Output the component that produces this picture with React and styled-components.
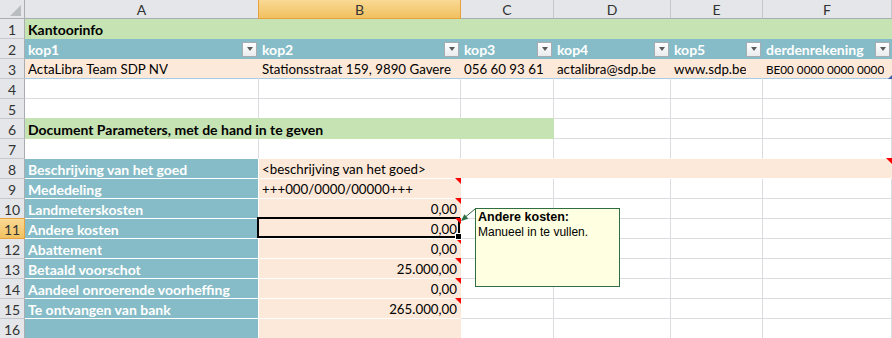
import React from "react";
import styled, { createGlobalStyle, css } from "styled-components";

const GREEN = "#c6e3b3";
const TEAL = "#86bcc7";
const PEACH = "#fde9d9";
const GRID = "#dadcdf";
const TABLE_LINE = "#a9cbe3";
const HEAD_BG = "#e4e6e9";
const HEAD_LINE = "#c4c7cb";
const HEAD_EDGE = "#a9adb2";
const ACTIVE_LINE = "#e9a13f";
const ACTIVE_BG = "linear-gradient(#f9d994, #f1c160)";

const GlobalStyle = createGlobalStyle`
  html, body {
    margin: 0;
    padding: 0;
    background: #fff;
    overflow: hidden;
  }
  body {
    font-family: Lato, "Liberation Sans", Arial, sans-serif;
  }
`;

const Sheet = styled.div`
  position: relative;
  display: grid;
  grid-template-columns: 25px 234px 202px 93px 117px 92px 129px;
  grid-template-rows: 19px repeat(16, 20px);
  width: 892px;
  height: 338px;
  overflow: hidden;
  font-size: 14px;
  color: #000;
`;

const Corner = styled.div`
  display: flex;
  align-items: flex-end;
  justify-content: flex-end;
  padding: 0 3px 2px 0;
  background: ${HEAD_BG};
  border-right: 1px solid ${HEAD_EDGE};
  border-bottom: 1px solid ${HEAD_EDGE};
`;

const CornerMark = styled.span`
  width: 0;
  height: 0;
  border-left: 11px solid transparent;
  border-bottom: 11px solid #b9bdc2;
`;

const ColHead = styled.div`
  display: flex;
  align-items: center;
  justify-content: center;
  padding-top: 1px;
  color: #333;
  background: ${(p) => (p.$active ? ACTIVE_BG : HEAD_BG)};
  border-right: 1px solid ${(p) => (p.$active ? ACTIVE_LINE : HEAD_LINE)};
  border-bottom: 1px solid ${(p) => (p.$active ? ACTIVE_LINE : HEAD_EDGE)};
  ${(p) => p.$active && css`box-shadow: -1px 0 0 ${ACTIVE_LINE};`}
`;

const RowHead = styled.div`
  display: flex;
  align-items: center;
  justify-content: center;
  padding-top: 1px;
  color: #333;
  background: ${(p) => (p.$active ? ACTIVE_BG : HEAD_BG)};
  border-right: 1px solid ${(p) => (p.$active ? ACTIVE_LINE : HEAD_EDGE)};
  border-bottom: 1px solid ${(p) => (p.$active ? ACTIVE_LINE : HEAD_LINE)};
  ${(p) => p.$active && css`box-shadow: 0 -1px 0 ${ACTIVE_LINE};`}
`;

const Cell = styled.div`
  position: relative;
  min-width: 0;
  display: flex;
  align-items: center;
  justify-content: ${(p) => (p.$right ? "flex-end" : "flex-start")};
  padding: 1px 3px 0 3px;
  grid-column: span ${(p) => p.$span || 1};
  background: ${(p) => p.$fill || "#fff"};
  border-right: 1px solid ${(p) => p.$edge || p.$fill || GRID};
  border-bottom: 1px solid ${(p) => p.$base || p.$edge || p.$fill || GRID};
  font-weight: ${(p) => (p.$bold ? 700 : 400)};
  font-size: ${(p) => (p.$bold ? "14px" : "13.3px")};
  color: ${(p) => (p.$light ? "#fff" : "#000")};

  ${(p) =>
    p.$note &&
    css`
      &::after {
        content: "";
        position: absolute;
        top: -1px;
        right: -1px;
        border-left: 6px solid transparent;
        border-top: 6px solid #f00;
      }
    `}

  ${(p) =>
    p.$corner &&
    css`
      padding-right: 0;
      font-size: 11.7px;
      &::after {
        content: "";
        position: absolute;
        bottom: -1px;
        right: -1px;
        border-left: 4px solid transparent;
        border-bottom: 4px solid #3a62a8;
      }
    `}

  ${(p) =>
    p.$selected &&
    css`
      z-index: 2;
      &::before {
        content: "";
        position: absolute;
        top: -2px;
        left: -2px;
        right: 0;
        bottom: 0;
        border: 2px solid #000;
        pointer-events: none;
      }
    `}
`;

const HeadCell = styled(Cell)`
  padding-right: 1px;
`;

const Text = styled.span`
  min-width: 0;
  overflow: hidden;
  white-space: nowrap;
`;

const FilterBtn = styled.span`
  flex: none;
  margin-left: auto;
  width: 15px;
  height: 15px;
  box-sizing: border-box;
  display: flex;
  align-items: center;
  justify-content: center;
  border: 1px solid #a8acb1;
  background: linear-gradient(#ffffff, #e9ebee);

  &::before {
    content: "";
    border-left: 3px solid transparent;
    border-right: 3px solid transparent;
    border-top: 4px solid #5a5a5a;
  }
`;

const FillHandle = styled.span`
  position: absolute;
  right: -1px;
  bottom: -1px;
  width: 5px;
  height: 5px;
  background: #000;
  box-shadow: 0 0 0 1px #fff;
  z-index: 3;
`;

const Comment = styled.div`
  position: absolute;
  left: 475px;
  top: 208px;
  width: 145px;
  height: 79px;
  box-sizing: border-box;
  padding: 1px 2px;
  border: 1px solid #2f6e45;
  background: #ffffe1;
  font-family: "Liberation Sans", Arial, sans-serif;
  font-size: 12px;
  line-height: 15px;
  color: #000;
  z-index: 5;
`;

const CommentTitle = styled.div`
  font-weight: 700;
  font-size: 12.5px;
`;

const Arrow = styled.svg`
  position: absolute;
  left: 458px;
  top: 206px;
  z-index: 6;
`;

const columns = ["A", "B", "C", "D", "E", "F"];
const heads = ["kop1", "kop2", "kop3", "kop4", "kop5", "derdenrekening"];
const info = [
  "ActaLibra Team SDP NV",
  "Stationsstraat 159, 9890 Gavere",
  "056 60 93 61",
  "actalibra@sdp.be",
  "www.sdp.be",
  "BE00 0000 0000 0000",
];

const params = [
  { row: 9, label: "Mededeling", value: "+++000/0000/00000+++", left: true, note: true },
  { row: 10, label: "Landmeterskosten", value: "0,00", note: true },
  { row: 11, label: "Andere kosten", value: "0,00", note: true, selected: true },
  { row: 12, label: "Abattement", value: "0,00", note: true },
  { row: 13, label: "Betaald voorschot", value: "25.000,00", note: true },
  { row: 14, label: "Aandeel onroerende voorheffing", value: "0,00", note: true },
  { row: 15, label: "Te ontvangen van bank", value: "265.000,00", note: true },
  { row: 16, label: "", value: "" },
];

const Empty = ({ count, base }) =>
  Array.from({ length: count }, (_, i) => <Cell key={i} $base={base} />);

export default function App() {
  return (
    <>
      <GlobalStyle />
      <Sheet>
        <Corner>
          <CornerMark />
        </Corner>
        {columns.map((c) => (
          <ColHead key={c} $active={c === "B"}>
            {c}
          </ColHead>
        ))}

        <RowHead>1</RowHead>
        <Cell $fill={GREEN} $span={6} $bold>
          <Text>Kantoorinfo</Text>
        </Cell>

        <RowHead>2</RowHead>
        {heads.map((h) => (
          <HeadCell key={h} $fill={TEAL} $bold $light>
            <Text>{h}</Text>
            <FilterBtn />
          </HeadCell>
        ))}

        <RowHead>3</RowHead>
        {info.map((v, i) => (
          <Cell key={v} $fill={PEACH} $base={TABLE_LINE} $corner={i === 5}>
            <Text>{v}</Text>
          </Cell>
        ))}

        <RowHead>4</RowHead>
        <Empty count={6} />

        <RowHead>5</RowHead>
        <Cell $base={GREEN} />
        <Cell $base={GREEN} />
        <Cell $base={GREEN} />
        <Empty count={3} />

        <RowHead>6</RowHead>
        <Cell $fill={GREEN} $span={3} $bold>
          <Text>Document Parameters, met de hand in te geven</Text>
        </Cell>
        <Empty count={3} />

        <RowHead>7</RowHead>
        <Empty count={6} base="#fff" />

        <RowHead>8</RowHead>
        <Cell $fill={TEAL} $edge="#fff" $bold $light>
          <Text>Beschrijving van het goed</Text>
        </Cell>
        <Cell $fill={PEACH} $span={5} $base="#fff" $note>
          <Text>&lt;beschrijving van het goed&gt;</Text>
        </Cell>

        {params.map((p) => (
          <React.Fragment key={p.row}>
            <RowHead $active={p.selected}>{p.row}</RowHead>
            <Cell $fill={TEAL} $edge="#fff" $bold $light>
              <Text>{p.label}</Text>
            </Cell>
            <Cell
              $fill={PEACH}
              $base="#fff"
              $right={!p.left}
              $note={p.note}
              $selected={p.selected}
            >
              <Text>{p.value}</Text>
              {p.selected && <FillHandle />}
            </Cell>
            <Empty count={4} />
          </React.Fragment>
        ))}

        <Arrow width="20" height="18" viewBox="0 0 20 18">
          <line x1="17" y1="3" x2="8" y2="10.5" stroke="#2f6e45" strokeWidth="1" />
          <polygon points="3,15 10.3,12.7 6.4,8.2" fill="#2f6e45" />
        </Arrow>
        <Comment>
          <CommentTitle>Andere kosten:</CommentTitle>
          <div>Manueel in te vullen.</div>
        </Comment>
      </Sheet>
    </>
  );
}
